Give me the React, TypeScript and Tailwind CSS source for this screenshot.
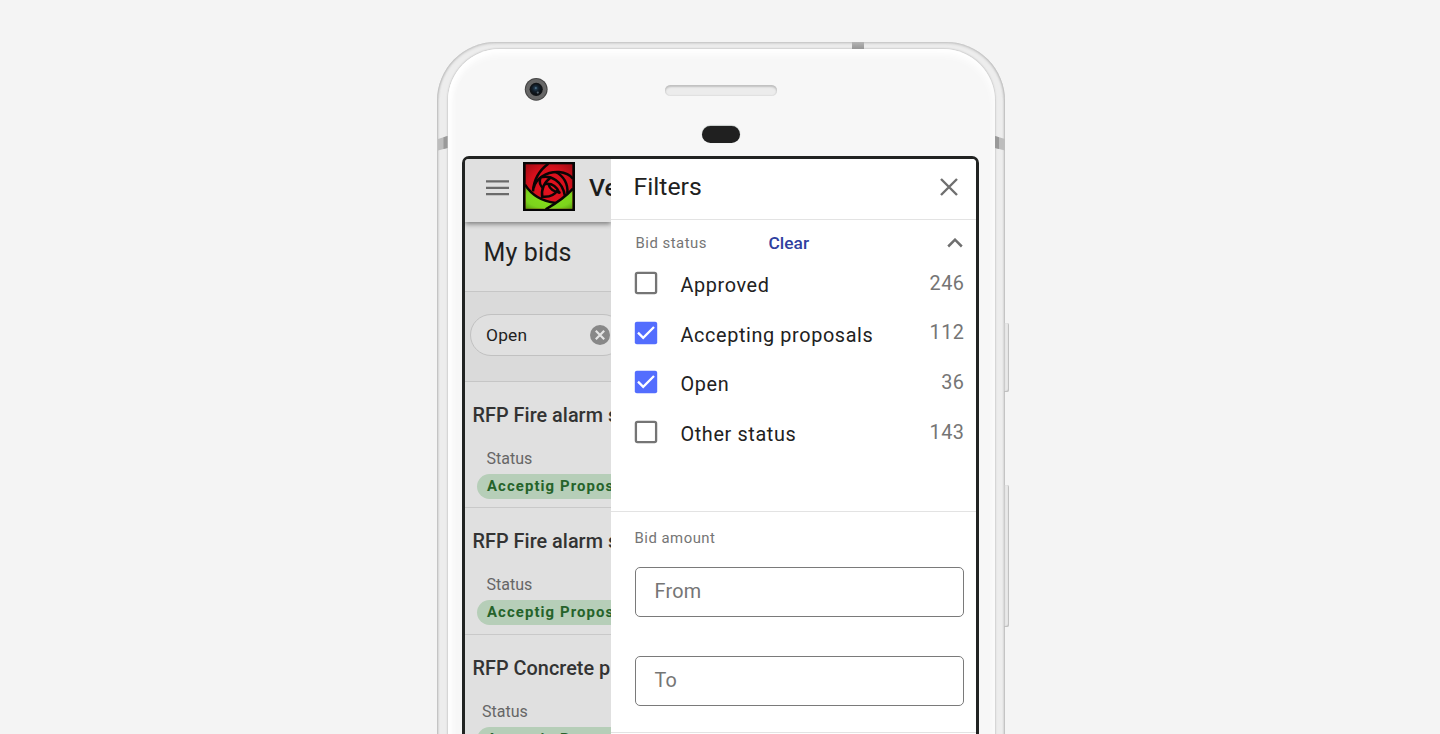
import React from "react";

type Bid = { title: string; statusPad: string };

const bids: Bid[] = [
  { title: "RFP Fire alarm s", statusPad: "pl-[21.5px]" },
  { title: "RFP Fire alarm s", statusPad: "pl-[21.5px]" },
  { title: "RFP Concrete p", statusPad: "pl-[17px]" },
];

const statuses = [
  { label: "Approved", count: 246, checked: false },
  { label: "Accepting proposals", count: 112, checked: true },
  { label: "Open", count: 36, checked: true },
  { label: "Other status", count: 143, checked: false },
];

function RoseLogo() {
  return (
    <svg width="52" height="49" viewBox="0 0 156 147" className="shrink-0">
      <defs>
        <radialGradient id="petal" cx="50%" cy="50%" r="70%">
          <stop offset="0" stopColor="#e5131f" />
          <stop offset="0.6" stopColor="#d5101c" />
          <stop offset="1" stopColor="#a00a12" />
        </radialGradient>
        <radialGradient id="leaf" cx="50%" cy="50%" r="70%">
          <stop offset="0" stopColor="#86e01c" />
          <stop offset="0.7" stopColor="#7cd41c" />
          <stop offset="1" stopColor="#5aa010" />
        </radialGradient>
      </defs>
      <rect width="156" height="147" fill="#050505" />
      <rect x="8" y="7" width="140" height="133" fill="url(#petal)" />
      <path d="M8 72C28 100 55 116 96 123L148 84V140H8Z" fill="url(#leaf)" />
      <g fill="none" stroke="#0a0505" strokeWidth="7.5">
        <path d="M6 68C25 98 55 118 98 123" />
        <path d="M150 80C128 104 100 124 68 142" />
        <path d="M76 5C50 24 32 54 30 88" />
        <path d="M32 78C38 50 70 28 108 30C128 32 142 40 150 50" />
        <path d="M52 46C84 38 118 56 126 102" />
        <path d="M98 30C122 42 136 66 133 94" />
        <path d="M52 48C48 60 52 72 62 80" />
        <path d="M58 108C54 84 62 62 84 46" />
        <path d="M66 66C88 62 104 76 110 94" />
        <path d="M76 66C80 80 92 90 112 92" />
        <path d="M58 104C80 106 96 98 104 84" />
      </g>
    </svg>
  );
}

function Camera() {
  return (
    <svg width="24" height="24" viewBox="0 0 24 24">
      <defs>
        <radialGradient id="lens" cx="45%" cy="40%" r="60%">
          <stop offset="0" stopColor="#2c4a60" />
          <stop offset="0.5" stopColor="#13202c" />
          <stop offset="1" stopColor="#0a0e12" />
        </radialGradient>
      </defs>
      <circle cx="12.2" cy="12.3" r="11.4" fill="#454545" />
      <circle cx="12.2" cy="12.3" r="10.4" fill="#676767" />
      <circle cx="12.2" cy="12.3" r="6.6" fill="#111417" />
      <circle cx="12.2" cy="12.3" r="5.2" fill="url(#lens)" />
      <circle cx="11.8" cy="11" r="1" fill="#4d6d84" />
      <circle cx="13.8" cy="15.6" r="1.1" fill="#56636d" />
    </svg>
  );
}

function Checkbox({ checked }: { checked: boolean }) {
  return (
    <svg width="24" height="24" viewBox="0 0 24 24" className="shrink-0">
      {checked ? (
        <>
          <rect x="0.8" y="0.8" width="22.4" height="22.4" rx="2" fill="#536dfe" />
          <path d="M4 11.6L9.2 16.8L20 6" fill="none" stroke="#fff" strokeWidth="2.3" />
        </>
      ) : (
        <rect x="1.9" y="1.9" width="20.2" height="20.2" rx="1.6" fill="none" stroke="#757575" strokeWidth="2.3" />
      )}
    </svg>
  );
}

function BidCard({ bid }: { bid: Bid }) {
  return (
    <div className="h-[126.5px] shrink-0 border-b-[1.5px] border-[#c9c9c9] pt-[21px]">
      <div className="pl-[7.5px] text-[19.84px] leading-[26px] font-medium tracking-[0.03px] text-[#333]">{bid.title}</div>
      <div className={`${bid.statusPad} mt-[20px] text-[16px] leading-[20px] text-[#666]`}>Status</div>
      <div className="mt-[5px] ml-[12px] h-[25px] w-[190px] rounded-full bg-[#b6ceb8] pl-[10px] text-[14.9px] leading-[25px] font-bold tracking-[1.1px] text-[#25632a]">
        Acceptig Propos
      </div>
    </div>
  );
}

function BidsPage() {
  return (
    <div className="flex w-[145.5px] shrink-0 flex-col overflow-hidden bg-[#e0e0e0] whitespace-nowrap">
      <header className="z-10 flex h-[63px] shrink-0 items-start bg-[#e0e0e0] pl-[21px] shadow-[0_2px_5px_rgba(0,0,0,0.45)]">
        <svg width="23" height="16" viewBox="0 0 23 16" className="mt-[21px] shrink-0">
          <path d="M0 1.3H23M0 7.8H23M0 14.2H23" stroke="#6a6a6a" strokeWidth="2.2" />
        </svg>
        <div className="mt-[3.5px] ml-[14px] flex"><RoseLogo /></div>
        <span className="mt-[14px] ml-[14px] text-[24.8px] leading-[30px] font-medium text-[#1c1c1c]">Ve</span>
      </header>
      <div className="h-[70px] shrink-0 border-b-[1.5px] border-[#c6c6c6] pt-[15px] pl-[18.5px] text-[25px] leading-[32px] tracking-[0.15px] text-[#1f1f1f]">
        My bids
      </div>
      <div className="h-[90px] shrink-0 border-b-[1.5px] border-[#c6c6c6] bg-[#dadada] pt-[22px] pl-[5px]">
        <div className="flex h-[42px] w-[154px] items-center rounded-full border-[1.5px] border-[#c1c1c1] bg-[#e0e0e0] pl-[15px]">
          <span className="w-[103.5px] text-[17.36px] leading-[24px] tracking-[0.2px] text-[#1f1f1f]">Open</span>
          <svg width="20" height="20" viewBox="0 0 20 20" className="shrink-0">
            <circle cx="10" cy="10" r="10" fill="#888" />
            <path d="M5.8 5.8L14.2 14.2M14.2 5.8L5.8 14.2" stroke="#e4e4e4" strokeWidth="2.2" />
          </svg>
        </div>
      </div>
      {bids.map((bid, i) => (
        <BidCard key={i} bid={bid} />
      ))}
    </div>
  );
}

function FilterDrawer() {
  return (
    <aside className="flex min-w-0 flex-1 flex-col bg-white">
      <div className="flex h-[61px] shrink-0 items-start justify-between border-b-[1.5px] border-[#e3e3e3] pt-[13px] pr-[18px] pl-[23px]">
        <h2 className="text-[24.8px] leading-[30px] tracking-[0px] text-[#212121]">Filters</h2>
        <svg width="18" height="18" viewBox="0 0 18 18" className="mt-[6.5px]">
          <path d="M1 1L17 17M17 1L1 17" stroke="#6f6f6f" strokeWidth="2.4" />
        </svg>
      </div>
      <section className="h-[292px] shrink-0 border-b-[1.5px] border-[#e3e3e3] pt-[12.5px] pr-[11.5px] pl-[23px]">
        <div className="flex h-[22px] items-center pl-[2px]">
          <span className="w-[133px] text-[14.9px] tracking-[0.5px] text-[#757575]">Bid status</span>
          <button className="text-[17.36px] leading-[21px] font-medium text-[#303f9f]">Clear</button>
          <svg width="16" height="10" viewBox="0 0 16 10" className="mr-[1.5px] ml-auto">
            <path d="M1.2 8.5L8 1.7L14.8 8.5" fill="none" stroke="#6f6f6f" strokeWidth="2.5" />
          </svg>
        </div>
        <ul className="mt-[4px]">
          {statuses.map((s) => (
            <li key={s.label} className="flex h-[49.6px] items-center">
              <Checkbox checked={s.checked} />
              <span className="ml-[23px] pt-[5.5px] text-[19.84px] leading-[24px] tracking-[0.62px] text-[#212121]">{s.label}</span>
              <span className="ml-auto pt-[1px] text-[19.84px] leading-[24px] tracking-[0.5px] text-[#757575]">{s.count}</span>
            </li>
          ))}
        </ul>
      </section>
      <section className="h-[221.5px] shrink-0 border-b-[1.5px] border-[#e3e3e3] pt-[16px] pr-[12px] pl-[24px]">
        <div className="text-[14.9px] leading-[20px] tracking-[0.5px] text-[#757575]">Bid amount</div>
        <div className="mt-[19px] flex h-[50px] items-center rounded-[5px] border-[1.3px] border-[#7a7a7a] pl-[19px] text-[19.84px] tracking-[0.2px] text-[#757575]">From</div>
        <div className="mt-[39px] flex h-[50px] items-center rounded-[5px] border-[1.3px] border-[#7a7a7a] pl-[19px] text-[19.84px] tracking-[0.2px] text-[#757575]">To</div>
      </section>
    </aside>
  );
}

export default function App() {
  return (
    <main className="flex h-[734px] w-[1440px] overflow-hidden bg-[#f4f4f4] pt-[42px] pl-[437px] font-[Roboto,sans-serif]">
      <div className="relative h-[1100px] w-[567.5px] shrink-0 rounded-t-[59px] bg-[#ededed] pt-[7px] pr-[10px] pl-[10.5px] shadow-[inset_0_1px_3px_#bcbcbc,inset_2px_0_2px_-1px_#bdbdbd,inset_-2px_0_2px_-1px_#bdbdbd]">
        <div className="absolute top-0 left-[415px] h-[7px] w-[12px] bg-gradient-to-b from-[#b5b5b5] to-[#969696]" />
        <svg width="10" height="15" viewBox="0 0 10 15" className="absolute top-[93.5px] left-[1px]">
          <path d="M0 3L9.5 0V12L0 14.5Z" fill="#bdbdbd" />
          <path d="M5.5 1.3L9.5 0V12L5.5 13Z" fill="#9a9a9a" />
        </svg>
        <svg width="10" height="15" viewBox="0 0 10 15" className="absolute top-[93.5px] right-0">
          <path d="M10 3L0 0V12L10 14.5Z" fill="#bdbdbd" />
          <path d="M4 1.3L0 0V12L4 13Z" fill="#9a9a9a" />
        </svg>
        <div className="absolute top-[281px] left-[567px] h-[69px] w-[5px] rounded-r-[2px] bg-[#e9e9e9] shadow-[inset_-1px_-1px_1px_#bdbdbd,inset_1px_0_1px_#c8c8c8]" />
        <div className="absolute top-[443px] left-[567px] h-[142px] w-[5px] rounded-r-[2px] bg-[#e9e9e9] shadow-[inset_-1px_-1px_1px_#bdbdbd,inset_1px_0_1px_#c8c8c8]" />
        <div className="flex h-[1093px] flex-col rounded-t-[52px] bg-[#f7f7f7] pr-[15.5px] pl-[14.5px] shadow-[0_0_1.5px_0.5px_#d0d0d0,inset_0_5px_8px_#ffffff,inset_4px_0_6px_#ffffff]">
          <div className="flex h-[77px] shrink-0 items-start pt-[28px] pl-[61.5px]">
            <Camera />
            <div className="mt-[8px] ml-[117px] h-[11px] w-[112px] rounded-full bg-[#ececec] shadow-[inset_0_2px_2px_#c0c0c0,inset_0_0_1px_1px_#e0e0e0]" />
          </div>
          <div className="mt-[0.4px] ml-[239.5px] h-[17px] w-[38px] shrink-0 rounded-full bg-[#202020] shadow-[0_-0.5px_1px_#a0aaa6]" />
          <div className="mt-[12.6px] flex h-[900px] shrink-0 overflow-hidden rounded-t-[7px] border-[3px] border-[#212322] bg-white">
            <BidsPage />
            <FilterDrawer />
          </div>
        </div>
      </div>
    </main>
  );
}
